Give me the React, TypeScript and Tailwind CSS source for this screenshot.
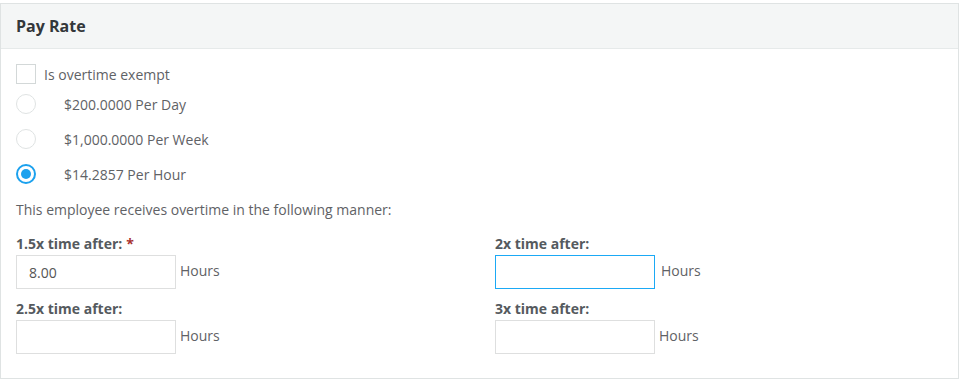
import React, { useState } from "react";

type Rate = "day" | "week" | "hour";

const rates: { id: Rate; label: string }[] = [
  { id: "day", label: "$200.0000 Per Day" },
  { id: "week", label: "$1,000.0000 Per Week" },
  { id: "hour", label: "$14.2857 Per Hour" },
];

const Radio = ({ checked }: { checked: boolean }) => (
  <span
    className={
      checked
        ? "flex h-[20px] w-[20px] items-center justify-center rounded-full border-2 border-[#1ba1ee] bg-white"
        : "flex h-[20px] w-[20px] items-center justify-center rounded-full border border-[#dfe3e3] bg-white"
    }
  >
    {checked && <span className="h-[10px] w-[10px] rounded-full bg-[#1ba1ee]" />}
  </span>
);

const HoursField = ({
  label,
  required,
  value,
  focused,
}: {
  label: string;
  required?: boolean;
  value?: string;
  focused?: boolean;
}) => (
  <div>
    <div className="h-[22px] text-[14px] font-bold leading-[22px] text-[#555a5e]">
      {label}
      {required && <span className="ml-1 text-[#a83232]">*</span>}
    </div>
    <div className="flex items-center">
      <input
        type="text"
        defaultValue={value}
        className={
          focused
            ? "h-[34px] w-[160px] border border-[#1ba9f5] px-3 text-[14px] text-[#555] outline-none"
            : "h-[34px] w-[160px] border border-[#dedfdf] px-3 text-[14px] text-[#555] outline-none"
        }
      />
      <span
        className={
          focused
            ? "mb-[4px] ml-[6px] text-[14px] text-[#5f6266]"
            : "mb-[4px] ml-[4px] text-[14px] text-[#5f6266]"
        }
      >
        Hours
      </span>
    </div>
  </div>
);

export default function App() {
  const [rate, setRate] = useState<Rate>("hour");
  const [exempt, setExempt] = useState(false);

  return (
    <div
      className="pt-[3px]"
      style={{ fontFamily: '"Open Sans", "Liberation Sans", sans-serif' }}
    >
      <div className="w-[959px] border border-[#dfe3e3] bg-white">
        <div className="flex h-[45px] items-center border-b border-[#e6eaea] bg-[#f4f6f6] px-[15px]">
          <h2 className="text-[16px] font-bold text-[#33373a]">Pay Rate</h2>
        </div>
        <div className="px-[15px] pt-[15px] pb-[24px] text-[14px] text-[#5f6266]">
          <label
            className="flex h-[20px] cursor-pointer items-center"
            onClick={() => setExempt(!exempt)}
          >
            <span className="h-[20px] w-[20px] border border-[#d3d8d8] bg-white" />
            <span className="ml-[8px]">Is overtime exempt</span>
          </label>
          <div className="mt-[10px] flex flex-col gap-[15px]">
            {rates.map((r) => (
              <label
                key={r.id}
                className="flex h-[20px] cursor-pointer items-center"
                onClick={() => setRate(r.id)}
              >
                <Radio checked={rate === r.id} />
                <span className="ml-[28px]">{r.label}</span>
              </label>
            ))}
          </div>
          <p className="mt-[16px] leading-[20px]">
            This employee receives overtime in the following manner:
          </p>
          <div className="mt-[13px] grid grid-cols-[479px_1fr] gap-y-[9px]">
            <HoursField label="1.5x time after:" required value="8.00" />
            <HoursField label="2x time after:" focused />
            <HoursField label="2.5x time after:" />
            <HoursField label="3x time after:" />
          </div>
        </div>
      </div>
    </div>
  );
}
